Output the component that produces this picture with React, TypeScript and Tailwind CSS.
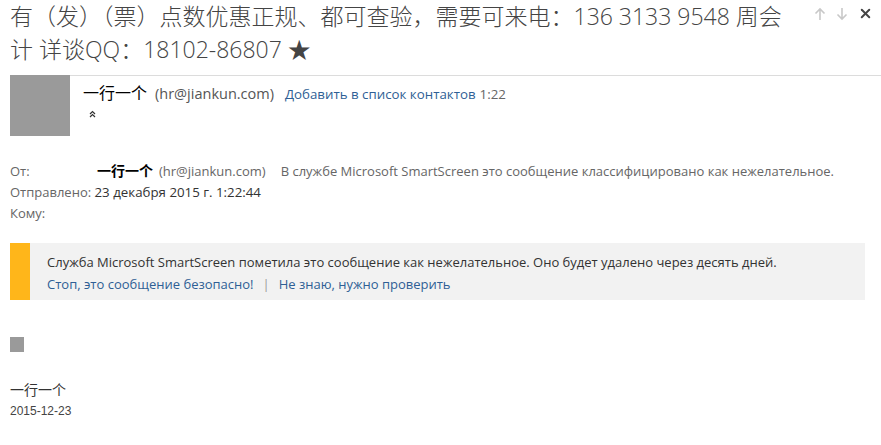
import { X } from 'lucide-react';

const font = { fontFamily: '"Open Sans", "Noto Sans CJK SC", sans-serif' };

const ArrowUp = () => (
  <svg width="12" height="14" viewBox="0 0 12 14" fill="none" stroke="#c8c8c8" strokeWidth="1.6">
    <path d="M6 13V2M1.5 6.5L6 2l4.5 4.5" />
  </svg>
);

const ArrowDown = () => (
  <svg width="12" height="14" viewBox="0 0 12 14" fill="none" stroke="#c8c8c8" strokeWidth="1.6">
    <path d="M6 1v11M1.5 7.5L6 12l4.5-4.5" />
  </svg>
);

const Caret = () => (
  <svg width="7" height="8" viewBox="0 0 7 8" fill="none" stroke="#333" strokeWidth="1.2">
    <path d="M1 4l2.5-2.5L6 4M1 7l2.5-2.5L6 7" />
  </svg>
);

export default function App() {
  return (
    <div className="w-[881px] h-[445px] bg-white overflow-hidden text-[#333]" style={font}>
      {/* subject */}
      <div className="flex items-start pl-[10px] pr-[8px]">
        <h1 className="w-[790px] text-[23px] leading-[33px] font-light text-[#444]">
          有（发）（票）点数优惠正规、都可查验，需要可来电：136 3133 9548 周会计 详谈QQ：18102-86807 ★
        </h1>
        <div className="flex items-center gap-[10px] ml-auto mt-[6px]">
          <ArrowUp />
          <ArrowDown />
          <X size={15} strokeWidth={3.2} color="#444" />
        </div>
      </div>

      {/* sender header */}
      <div className="flex mt-[9px] pl-[10px]">
        <div className="w-[60px] h-[61px] bg-[#9a9a9a]" />
        <div className="flex-1 border-t border-[#dcdcdc] pl-[13px] pt-[5px]">
          <div className="flex items-baseline gap-[8px]">
            <span className="text-[16px] text-black">一行一个</span>
            <span className="text-[14.5px] text-[#555]">(hr@jiankun.com)</span>
            <span className="ml-[3px] text-[13.3px] text-[#2f5f95]">Добавить в список контактов</span>
            <span className="-ml-[4px] text-[13.3px] text-[#666]">1:22</span>
          </div>
          <div className="pl-[6px] mt-[5px]">
            <Caret />
          </div>
        </div>
      </div>

      {/* from block */}
      <div className="mt-[24px] pl-[10px] text-[13px] leading-[21px] text-[#666]">
        <div className="flex items-baseline">
          <span className="w-[87px]">От:</span>
          <span className="text-[14px] font-bold text-black">一行一个</span>
          <span className="ml-[6px]">(hr@jiankun.com)</span>
          <span className="ml-[15px]">В службе Microsoft SmartScreen это сообщение классифицировано как нежелательное.</span>
        </div>
        <div>
          Отправлено: <span className="text-[13.3px] text-[#333]">23 декабря 2015 г. 1:22:44</span>
        </div>
        <div>Кому:</div>
      </div>

      {/* junk banner */}
      <div className="flex mt-[19px] ml-[10px] w-[855px] h-[57px] bg-[#f2f2f2]">
        <div className="w-[20px] bg-[#ffb61a]" />
        <div className="pl-[17px] pt-[8px] text-[13px] leading-[22px]">
          <div className="text-[#333]">Служба Microsoft SmartScreen пометила это сообщение как нежелательное. Оно будет удалено через десять дней.</div>
          <div className="flex gap-[9px] text-[#2f5f95]">
            <span>Стоп, это сообщение безопасно!</span>
            <span className="text-[#999]">|</span>
            <span>Не знаю, нужно проверить</span>
          </div>
        </div>
      </div>

      {/* body */}
      <div className="pl-[10px] mt-[37px]">
        <div className="w-[14px] h-[15px] bg-[#9a9a9a]" />
        <div className="mt-[27px] text-[14px] leading-[22px] text-[#333]">一行一个</div>
        <div className="text-[12px] leading-[20px] text-[#444]" style={{ fontFamily: '"Liberation Sans", sans-serif' }}>2015-12-23</div>
      </div>
    </div>
  );
}
